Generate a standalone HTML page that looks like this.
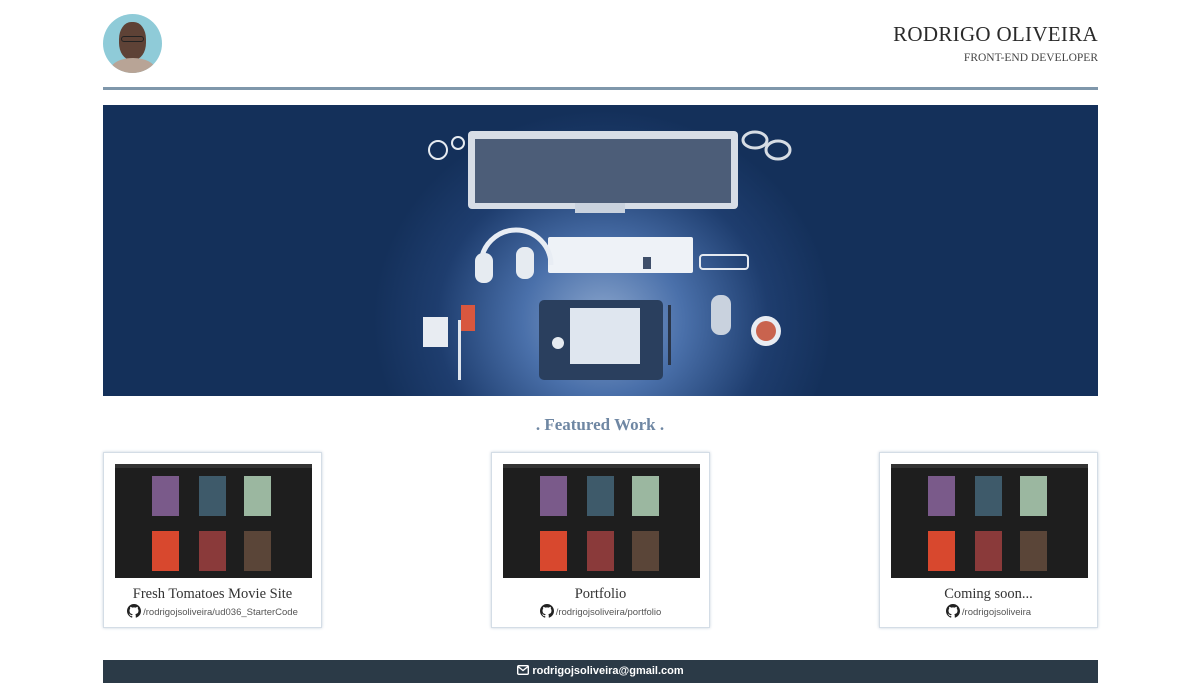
<!DOCTYPE html>
<html><head><meta charset="utf-8"><style>
*{margin:0;padding:0;box-sizing:border-box}
body{width:1200px;height:696px;background:#fff;font-family:"Liberation Sans",sans-serif;position:relative;overflow:hidden}
.abs{position:absolute}
.avatar{left:103px;top:14px;width:59px;height:59px;border-radius:50%;background:#8fcbd8;overflow:hidden}
.name{right:102px;top:22px;font-family:"Liberation Serif",serif;font-size:21px;color:#2a2a2a;letter-spacing:.3px}
.role{right:102px;top:52px;font-family:"Liberation Serif",serif;font-size:11.5px;color:#444}
.line{left:103px;top:87px;width:995px;height:3px;background:#7f97ab}
.hero{left:103px;top:105px;width:995px;height:291px;background:radial-gradient(ellipse 230px 210px at 500px 215px,#8aa5cc 0%,#4a70aa 35%,#1e3d6e 72%,#14305a 100%);overflow:hidden}
.fw{left:0;width:1200px;top:415px;text-align:center;font-family:"Liberation Serif",serif;font-size:17px;color:#6f87a3;font-weight:bold}
.card{top:452px;width:219px;height:176px;border:1px solid #d4dde6;box-shadow:0 0 3px #c8d3dd;background:#fff}
.shot{position:absolute;left:11px;top:11px;width:197px;height:114px;background:#1e1e1e}
.shot .bar{height:4px;background:#333}
.p{position:absolute;width:27px;height:40px}
.t{position:absolute;top:133px;width:100%;text-align:center;font-family:"Liberation Serif",serif;font-size:14.5px;color:#333}
.l{position:absolute;top:151px;width:100%;text-align:center;font-size:9.5px;color:#555}
.l svg{vertical-align:-3px;margin-right:2px}
.foot{left:103px;top:660px;width:995px;height:23px;background:#2b3a47;color:#fff;font-size:11px;font-weight:bold;text-align:center;line-height:23px}
</style></head><body>
<div class="abs avatar"><div style="position:absolute;left:16px;top:8px;width:27px;height:38px;border-radius:45%;background:#5e4236"></div><div style="position:absolute;left:18px;top:22px;width:23px;height:6px;border:1.5px solid #222;border-radius:3px"></div><div style="position:absolute;left:8px;top:44px;width:44px;height:22px;border-radius:50%;background:#b8a496"></div></div>
<div class="abs name">RODRIGO OLIVEIRA</div>
<div class="abs role">FRONT-END DEVELOPER</div>
<div class="abs line"></div>
<div class="abs hero">
<svg width="995" height="291">
<rect x="365" y="26" width="270" height="78" rx="4" fill="#d7dde6"/>
<rect x="372" y="34" width="256" height="64" fill="#4c5d78"/>
<rect x="472" y="98" width="50" height="10" fill="#c9d2de"/>
<rect x="445" y="132" width="145" height="36" rx="2" fill="#eef2f7"/>
<rect x="540" y="152" width="8" height="12" fill="#3f4f6a"/>
<rect x="597" y="150" width="48" height="14" rx="3" fill="none" stroke="#e5eaf1" stroke-width="2"/>
<path d="M378 160a35 35 0 0 1 70 0" fill="none" stroke="#e8edf4" stroke-width="5"/>
<rect x="372" y="148" width="18" height="30" rx="8" fill="#e6ebf1"/><rect x="413" y="142" width="18" height="32" rx="8" fill="#e6ebf1"/>
<rect x="436" y="195" width="124" height="80" rx="5" fill="#2a3f5e"/>
<rect x="467" y="203" width="70" height="56" fill="#dfe6ef"/>
<circle cx="455" cy="238" r="6" fill="#e6ebf1"/>
<rect x="320" y="212" width="25" height="30" fill="#e8ecf2"/>
<rect x="358" y="200" width="14" height="26" fill="#d8573f"/>
<rect x="355" y="215" width="3" height="60" fill="#e0e6ee"/>
<rect x="565" y="200" width="3" height="60" fill="#2a3548"/>
<circle cx="663" cy="226" r="15" fill="#e8ecf2"/><circle cx="663" cy="226" r="10" fill="#c9634e"/>
<rect x="608" y="190" width="20" height="40" rx="9" fill="#c9d2de"/>
<circle cx="335" cy="45" r="9" fill="none" stroke="#e6ebf1" stroke-width="2"/>
<circle cx="355" cy="38" r="6" fill="none" stroke="#e6ebf1" stroke-width="2"/>
<ellipse cx="652" cy="35" rx="12" ry="8" fill="none" stroke="#d6dce4" stroke-width="3"/>
<ellipse cx="675" cy="45" rx="12" ry="9" fill="none" stroke="#d6dce4" stroke-width="3"/>
</svg></div>
<div class="abs fw">. Featured Work .</div>

<div class="abs card" style="left:103px"><div class="shot"><div class="bar"></div>
<div class="p" style="left:37px;top:12px;background:#7a5a8a"></div><div class="p" style="left:84px;top:12px;background:#3e5a6a"></div><div class="p" style="left:129px;top:12px;background:#9bb7a0"></div>
<div class="p" style="left:37px;top:67px;background:#d8482e"></div><div class="p" style="left:84px;top:67px;background:#8a3a3a"></div><div class="p" style="left:129px;top:67px;background:#5a4538"></div></div>
<div class="t">Fresh Tomatoes Movie Site</div>
<div class="l"><svg width="14" height="14" viewBox="0 0 16 16"><path fill="#222" d="M8 0C3.6 0 0 3.6 0 8c0 3.5 2.3 6.5 5.5 7.6.4.1.5-.2.5-.4v-1.4c-2.2.5-2.700-1-2.700-1-.4-.9-.9-1.2-.9-1.2-.7-.5.1-.5.1-.5.8.1 1.2.8 1.2.8.7 1.3 1.9.9 2.3.7.1-.5.3-.9.5-1.1-1.8-.2-3.6-.9-3.6-4 0-.9.3-1.6.8-2.1-.1-.2-.4-1 .1-2.1 0 0 .7-.2 2.2.8.6-.2 1.3-.3 2-.3s1.4.1 2 .3c1.5-1 2.2-.8 2.2-.8.4 1.1.2 1.9.1 2.1.5.6.8 1.3.8 2.1 0 3.1-1.9 3.7-3.6 3.9.3.3.5.8.5 1.5v2.2c0 .2.1.5.6.4C13.7 14.5 16 11.5 16 8c0-4.4-3.6-8-8-8z"/></svg>/rodrigojsoliveira/ud036_StarterCode</div></div>

<div class="abs card" style="left:491px"><div class="shot"><div class="bar"></div>
<div class="p" style="left:37px;top:12px;background:#7a5a8a"></div><div class="p" style="left:84px;top:12px;background:#3e5a6a"></div><div class="p" style="left:129px;top:12px;background:#9bb7a0"></div>
<div class="p" style="left:37px;top:67px;background:#d8482e"></div><div class="p" style="left:84px;top:67px;background:#8a3a3a"></div><div class="p" style="left:129px;top:67px;background:#5a4538"></div></div>
<div class="t">Portfolio</div>
<div class="l"><svg width="14" height="14" viewBox="0 0 16 16"><path fill="#222" d="M8 0C3.6 0 0 3.6 0 8c0 3.5 2.3 6.5 5.5 7.6.4.1.5-.2.5-.4v-1.4c-2.2.5-2.7-1-2.7-1-.4-.9-.9-1.2-.9-1.2-.7-.5.1-.5.1-.5.8.1 1.2.8 1.2.8.7 1.3 1.9.9 2.3.7.1-.5.3-.9.5-1.1-1.8-.2-3.6-.9-3.6-4 0-.9.3-1.6.8-2.1-.1-.2-.4-1 .1-2.1 0 0 .7-.2 2.2.8.6-.2 1.3-.3 2-.3s1.4.1 2 .3c1.5-1 2.2-.8 2.2-.8.4 1.1.2 1.9.1 2.1.5.6.8 1.3.8 2.1 0 3.1-1.9 3.7-3.6 3.9.3.3.5.8.5 1.5v2.2c0 .2.1.5.6.4C13.7 14.5 16 11.5 16 8c0-4.4-3.6-8-8-8z"/></svg>/rodrigojsoliveira/portfolio</div></div>

<div class="abs card" style="left:879px"><div class="shot"><div class="bar"></div>
<div class="p" style="left:37px;top:12px;background:#7a5a8a"></div><div class="p" style="left:84px;top:12px;background:#3e5a6a"></div><div class="p" style="left:129px;top:12px;background:#9bb7a0"></div>
<div class="p" style="left:37px;top:67px;background:#d8482e"></div><div class="p" style="left:84px;top:67px;background:#8a3a3a"></div><div class="p" style="left:129px;top:67px;background:#5a4538"></div></div>
<div class="t">Coming soon...</div>
<div class="l"><svg width="14" height="14" viewBox="0 0 16 16"><path fill="#222" d="M8 0C3.6 0 0 3.6 0 8c0 3.5 2.3 6.5 5.5 7.6.4.1.5-.2.5-.4v-1.4c-2.2.5-2.7-1-2.7-1-.4-.9-.9-1.2-.9-1.2-.7-.5.1-.5.1-.5.8.1 1.2.8 1.2.8.7 1.3 1.9.9 2.3.7.1-.5.3-.9.5-1.1-1.8-.2-3.6-.9-3.6-4 0-.9.3-1.6.8-2.1-.1-.2-.4-1 .1-2.1 0 0 .7-.2 2.2.8.6-.2 1.3-.3 2-.3s1.4.1 2 .3c1.5-1 2.2-.8 2.2-.8.4 1.1.2 1.9.1 2.1.5.6.8 1.3.8 2.1 0 3.1-1.9 3.7-3.6 3.9.3.3.5.8.5 1.5v2.2c0 .2.1.5.6.4C13.7 14.5 16 11.5 16 8c0-4.4-3.6-8-8-8z"/></svg>/rodrigojsoliveira</div></div>

<div class="abs foot"><svg width="12" height="10" viewBox="0 0 12 10" style="vertical-align:-1px;margin-right:3px"><rect x="0.7" y="0.7" width="10.6" height="8.6" rx="1" fill="none" stroke="#fff" stroke-width="1.4"/><path d="M1 1.5l5 4 5-4" fill="none" stroke="#fff" stroke-width="1.4"/></svg>rodrigojsoliveira@gmail.com</div>
</body></html>
